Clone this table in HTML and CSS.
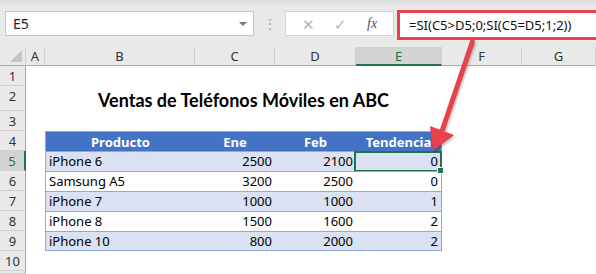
FILE: index.html
```html
<!DOCTYPE html>
<html>
<head>
  <title>Ventas de Teléfonos Móviles</title>
  <link rel="stylesheet" href="styles.css">
</head>
<body>

<div class="topbar">
  <div class="namebox">
    <span>E5</span>
    <span class="caret"></span>
  </div>
  <div class="grip">⋮</div>
  <div class="fxbox">
    <span class="fxbtn">✕</span>
    <span class="fxbtn">✓</span>
    <span class="fxbtn fx">fx</span>
  </div>
  <div class="formula">=SI(C5&gt;D5;0;SI(C5=D5;1;2))</div>
</div>

<div class="sheet" id="sheet"></div>

<svg class="arrow" width="596" height="274">
  <line x1="473" y1="40" x2="442" y2="131" stroke="#e8414a" stroke-width="5" />
  <polygon points="433,151 430,126 454,135" fill="#e8414a" />
</svg>

<script>
const cols = ['A', 'B', 'C', 'D', 'E', 'F', 'G'];
const rows = [
  ['iPhone 6', 2500, 2100, 0],
  ['Samsung A5', 3200, 2500, 0],
  ['iPhone 7', 1000, 1000, 1],
  ['iPhone 8', 1500, 1600, 2],
  ['iPhone 10', 800, 2000, 2]
];
const sheet = document.getElementById('sheet');

function cell(cls, text) {
  let div = document.createElement('div');
  div.className = cls;
  if (text !== undefined) div.textContent = String(text);
  sheet.appendChild(div);
  return div;
}

// column headers
cell('corner');
cols.forEach(c => cell(c == 'E' ? 'colhead active' : 'colhead', c));

for (let r = 1; r <= 11; r++) {
  // row 11 only peeks in at the bottom edge
  cell(r == 5 ? 'rowhead active' : 'rowhead', r < 11 ? r : undefined);

  if (r == 2) {
    cell('cell');
    cell('cell title', 'Ventas de Teléfonos Móviles en ABC');
    cell('cell');
    cell('cell');
    continue;
  }

  if (r == 4) {
    cell('cell');
    ['Producto', 'Ene', 'Feb', 'Tendencia'].forEach((h, i) => {
      cell('cell th' + (i == 0 ? ' first' : '') + (i == 3 ? ' last' : ''), h);
    });
    cell('cell');
    cell('cell');
    continue;
  }

  if (r >= 5 && r <= 9) {
    const row = rows[r - 5];
    let cls = 'cell td';
    if (r % 2 == 1) cls += ' band';
    if (r == 9) cls += ' bottom';
    cell('cell');
    row.forEach((v, i) => {
      let c = cell(cls + (i > 0 ? ' num' : ' first') + (i == 3 ? ' last' : ''), v);
      if (r == 5 && i == 3) c.classList.add('selected');
    });
    cell('cell');
    cell('cell');
    continue;
  }

  cols.forEach(() => cell('cell'));
}
</script>
</body>
</html>
```

FILE: styles.css
```css
body {
  margin: 0;
  width: 596px;
  height: 274px;
  overflow: hidden;
  background: #fff;
  font-family: "Noto Sans", sans-serif;
  position: relative;
}

.topbar {
  height: 47px;
  background: linear-gradient(#dcdcdc, #e9e9e9 6px);
  display: flex;
  align-items: flex-start;
  padding-top: 11px;
  box-sizing: border-box;
}

.namebox {
  margin-left: 5px;
  width: 249px;
  height: 25px;
  box-sizing: border-box;
  background: #fff;
  border: 1px solid #c6c6c6;
  display: flex;
  align-items: center;
  justify-content: space-between;
  padding: 0 6px 0 7px;
  font-size: 14px;
  color: #222;
}

.caret {
  border-left: 4px solid transparent;
  border-right: 4px solid transparent;
  border-top: 4px solid #777;
}

.grip {
  width: 31px;
  text-align: center;
  color: #aaa;
  font-size: 14px;
  line-height: 25px;
}

.fxbox {
  width: 109px;
  height: 25px;
  box-sizing: border-box;
  background: #fff;
  border: 1px solid #d4d4d4;
  display: flex;
  align-items: center;
  justify-content: space-around;
  padding: 0 6px;
}

.fxbtn {
  color: #b4b4b4;
  font-size: 15px;
}

.fx {
  color: #555;
  font-family: "Liberation Serif", serif;
  font-style: italic;
  font-size: 14px;
}

.formula {
  margin-left: 3px;
  margin-top: -1px;
  flex: 1;
  height: 30px;
  box-sizing: border-box;
  background: #fff;
  border: 3px solid #e8414a;
  border-right: none;
  padding-left: 9px;
  line-height: 24px;
  font-size: 13px;
  color: #111;
}

.sheet {
  display: grid;
  grid-template-columns: 26px 19px 150px 80px 81px 86px 80px 74px;
  grid-template-rows: 19px 20px 25px repeat(8, 20px) 3px;
  font-size: 13px;
  color: #000;
}

.corner {
  background: #e9e9e9;
  border-right: 1px solid #cfcfcf;
  border-bottom: 1px solid #ababab;
  position: relative;
}

.corner::after {
  content: '';
  position: absolute;
  right: 3px;
  bottom: 3px;
  border-left: 12px solid transparent;
  border-bottom: 12px solid #c4c4c4;
}

.colhead {
  background: #e9e9e9;
  border-right: 1px solid #cfcfcf;
  border-bottom: 1px solid #ababab;
  text-align: center;
  line-height: 19px;
  font-size: 13px;
  color: #333;
}

.rowhead {
  background: #e9e9e9;
  border-right: 1px solid #ababab;
  border-bottom: 1px solid #cfcfcf;
  text-align: center;
  line-height: 20px;
  font-size: 13px;
  color: #333;
}

.colhead.active {
  background: #d3d3d3;
  border-bottom: 2px solid #217346;
  color: #217346;
}

.rowhead.active {
  background: #d3d3d3;
  border-right: 2px solid #217346;
  color: #217346;
}

.cell {
  line-height: 20px;
  padding: 0 3px;
  white-space: nowrap;
  position: relative;
}

.title {
  grid-column: span 4;
  text-align: center;
  font-family: Lato, sans-serif;
  font-weight: bold;
  font-size: 18px;
  line-height: 28px;
}

.th {
  background: #4472c4;
  color: #fff;
  font-weight: bold;
  text-align: center;
  border-top: 1px solid #8ea9db;
}

.td {
  border-top: 1px solid #8ea9db;
  line-height: 19px;
}

.band {
  background: #d9e1f2;
}

.num {
  text-align: right;
}

.first {
  border-left: 1px solid #8ea9db;
}

.last {
  border-right: 1px solid #8ea9db;
}

.bottom {
  box-sizing: border-box;
  border-bottom: 1px solid #8ea9db;
}

.selected::after {
  content: '';
  position: absolute;
  left: -2px;
  top: -1px;
  right: -1px;
  bottom: -1px;
  border: 2px solid #217346;
}

.selected::before {
  content: '';
  position: absolute;
  right: -3px;
  bottom: -3px;
  width: 5px;
  height: 5px;
  background: #217346;
  border: 1px solid #fff;
  z-index: 1;
}

.arrow {
  position: absolute;
  left: 0;
  top: 0;
  pointer-events: none;
  filter: drop-shadow(1px 2px 1px rgba(0, 0, 0, 0.25));
}
```
